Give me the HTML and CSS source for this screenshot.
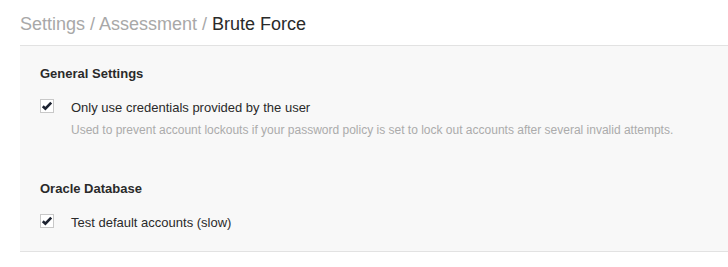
FILE: index.html
```html
<!DOCTYPE html>
<html>
<head>
<meta charset="utf-8">
<link rel="stylesheet" href="styles.css">
</head>
<body>
<div class="page">
  <h1 class="crumbs"><span class="muted">Settings / Assessment / </span><span class="current">Brute Force</span></h1>
  <div class="panel">
    <section class="group">
      <h2 class="group-title">General Settings</h2>
      <div class="option">
        <span class="check"><svg viewBox="0 0 12 12" width="12" height="12"><path d="M1.8 6.2 L4.4 8.7 L10.2 2.6" fill="none" stroke="#1c2230" stroke-width="2.6" stroke-linejoin="miter"/></svg></span>
        <div class="option-text">
          <div class="label">Only use credentials provided by the user</div>
          <div class="help">Used to prevent account lockouts if your password policy is set to lock out accounts after several invalid attempts.</div>
        </div>
      </div>
    </section>
    <section class="group second">
      <h2 class="group-title">Oracle Database</h2>
      <div class="option">
        <span class="check"><svg viewBox="0 0 12 12" width="12" height="12"><path d="M1.8 6.2 L4.4 8.7 L10.2 2.6" fill="none" stroke="#1c2230" stroke-width="2.6" stroke-linejoin="miter"/></svg></span>
        <div class="option-text">
          <div class="label">Test default accounts (slow)</div>
        </div>
      </div>
    </section>
  </div>
</div>
</body>
</html>
```

FILE: styles.css
```css
html, body {
  margin: 0;
  padding: 0;
  background: #ffffff;
  font-family: "Liberation Sans", Arial, sans-serif;
}
.page {
  padding: 12px 0 0 20px;
}
.crumbs {
  margin: 0;
  font-size: 18px;
  font-weight: normal;
  line-height: 24px;
  padding-bottom: 9px;
  border-bottom: 1px solid #e2e2e2;
}
.muted { color: #a8a8a8; }
.current { color: #2a2a2a; }
.panel {
  background: #f8f8f8;
  border-bottom: 1px solid #e2e2e2;
  padding: 20px 20px 21px 20px;
}
.group-title {
  margin: 0;
  font-size: 13px;
  font-weight: bold;
  color: #2a2a2a;
  line-height: 16px;
}
.option {
  display: flex;
  gap: 17px;
  margin-top: 18px;
}
.check {
  width: 12px;
  height: 12px;
  margin-top: -1px;
  border: 1px solid #c8c8c8;
  background: #fff;
  display: flex;
  align-items: center;
  justify-content: center;
  flex: none;
}
.check svg { width: 12px; height: 12px; display: block; }
.label {
  font-size: 13px;
  color: #2a2a2a;
  line-height: 15px;
}
.help {
  font-size: 12px;
  color: #ababab;
  line-height: 14px;
  margin-top: 8px;
}
.second {
  margin-top: 44px;
}
```
